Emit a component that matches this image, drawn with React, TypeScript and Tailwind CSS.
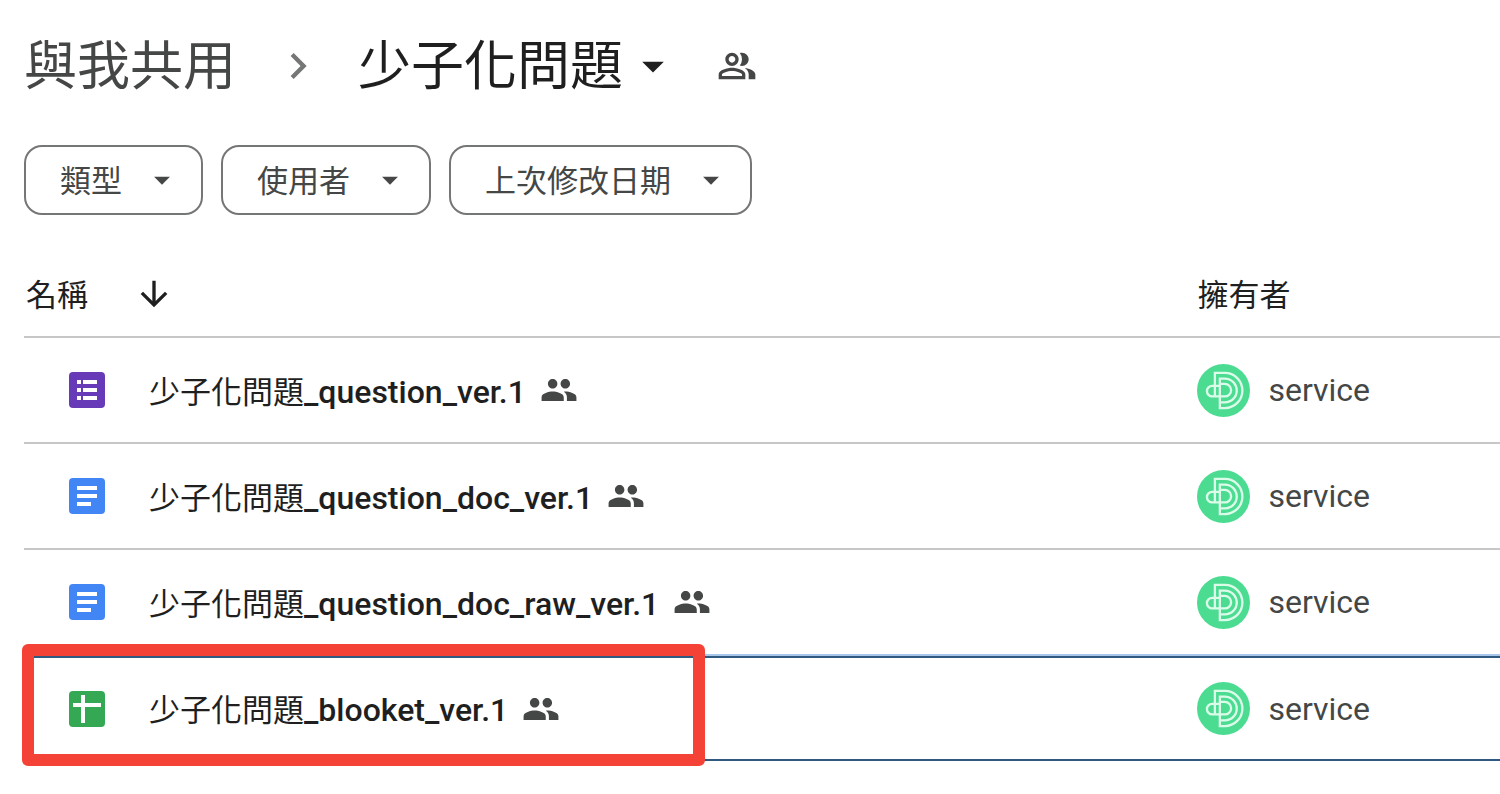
import * as React from "react"
import {
  MdArrowDownward,
  MdArrowDropDown,
  MdChevronRight,
  MdOutlinePeopleAlt,
  MdPeople,
} from "react-icons/md"

type FileKind = "form" | "doc" | "sheet"

interface DriveFile {
  kind: FileKind
  folder: string
  suffix: string
  owner: string
  selected?: boolean
}

const filters = ["類型", "使用者", "上次修改日期"]

const files: DriveFile[] = [
  { kind: "form", folder: "少子化問題", suffix: "_question_ver.1", owner: "service" },
  { kind: "doc", folder: "少子化問題", suffix: "_question_doc_ver.1", owner: "service" },
  { kind: "doc", folder: "少子化問題", suffix: "_question_doc_raw_ver.1", owner: "service" },
  { kind: "sheet", folder: "少子化問題", suffix: "_blooket_ver.1", owner: "service", selected: true },
]

function FileIcon({ kind }: { kind: FileKind }) {
  return (
    <svg viewBox="0 0 36 36" className="size-9 shrink-0" aria-hidden="true">
      {kind === "form" && (
        <>
          <rect width="36" height="36" rx="4" fill="#673ab7" />
          <path
            d="M8 8h4v4H8zM14 8h14v4H14zM8 16h4v4H8zM14 16h14v4H14zM8 24h4v4H8zM14 24h14v4H14z"
            fill="#fff"
          />
        </>
      )}
      {kind === "doc" && (
        <>
          <rect width="36" height="36" rx="4" fill="#4285f4" />
          <path d="M8 8h20v4H8zM8 16h20v4H8zM8 24h14v4H8z" fill="#fff" />
        </>
      )}
      {kind === "sheet" && (
        <>
          <rect width="36" height="36" rx="4" fill="#34a853" />
          <path d="M12 4h4v8h16v4H16v16h-4V16H4v-4h8z" fill="#fff" />
        </>
      )}
    </svg>
  )
}

function OwnerAvatar() {
  return (
    <svg viewBox="0 0 160 160" className="size-[53px] shrink-0" aria-hidden="true">
      <circle cx="80" cy="80" r="80" fill="#4bdc92" />
      <g fill="none" stroke="#dcfcea" strokeWidth="7">
        <path d="M54 98V27H84a53 53 0 0 1 0 106H69V44H84a36 36 0 0 1 0 72H69" />
        <path d="M69 66H46a16 16 0 0 0 0 32H84a19 19 0 0 0 0-38H69" />
      </g>
    </svg>
  )
}

function FileRow({ file }: { file: DriveFile }) {
  const border = file.selected
    ? "h-[105px] border-y-2 border-[#30597f]"
    : "h-[106px] border-b-2 border-[#c7c7c7] group-has-[+tr[aria-selected=true]]:border-[#a8c7ea]"

  return (
    <tr className="group" aria-selected={file.selected ?? false}>
      <td className={`relative p-0 ${border}`}>
        <div className="flex items-center pl-[45px]">
          <FileIcon kind={file.kind} />
          <a href="#" className="ml-11 pt-1 whitespace-nowrap text-[31px] leading-10 text-[#1f1f1f]">
            {file.folder}
            <span className="text-[32px] font-medium">{file.suffix}</span>
          </a>
          <MdPeople className="ml-3.5 size-[38px] shrink-0 text-[#444746]" aria-hidden="true" />
        </div>
        {file.selected && (
          <div className="pointer-events-none absolute -top-3.5 -bottom-[7px] -left-0.5 w-[683px] rounded-md border-12 border-[#f44336]" />
        )}
      </td>
      <td className={`p-0 ${border}`}>
        <div className="flex items-center gap-[18px] text-[32px] leading-10 text-[#444746]">
          <OwnerAvatar />
          {file.owner}
        </div>
      </td>
    </tr>
  )
}

export default function App() {
  return (
    <main className="min-h-screen overflow-x-hidden bg-white pl-6 font-[Roboto,'Noto_Sans_CJK_TC',sans-serif] text-[#1f1f1f]">
      <nav className="flex h-[131px] items-center text-[53px] leading-none" aria-label="Breadcrumb">
        <a href="#" className="pt-1 text-[#444746]">
          與我共用
        </a>
        <MdChevronRight className="ml-9 size-[52px] text-[#747775]" aria-hidden="true" />
        <button type="button" className="ml-[34px] flex items-center">
          <span className="pt-1">少子化問題</span>
          <MdArrowDropDown className="ml-1 size-[52px]" aria-hidden="true" />
        </button>
        <button type="button" className="ml-[38px] text-[#444746]" aria-label="共用">
          <MdOutlinePeopleAlt className="size-10" />
        </button>
      </nav>

      <div className="mt-3.5 flex gap-[18px]">
        {filters.map((label) => (
          <button
            key={label}
            type="button"
            className="flex h-[70px] items-center gap-[21px] rounded-[18px] border-2 border-[#747775] pr-5 pl-[34px] text-[31px] text-[#444746]"
          >
            <span className="pt-1">{label}</span>
            <MdArrowDropDown className="size-[38px]" aria-hidden="true" />
          </button>
        ))}
      </div>

      <table className="mt-9 w-full table-fixed border-separate border-spacing-0 text-left">
        <thead>
          <tr className="text-[31px] leading-10">
            <th className="h-[87px] w-[79.5%] border-b-2 border-[#c7c7c7] p-0 font-normal">
              <button type="button" className="flex items-center gap-[46px] pl-0.5">
                <span className="pt-1">名稱</span>
                <MdArrowDownward className="size-10" aria-hidden="true" />
              </button>
            </th>
            <th className="border-b-2 border-[#c7c7c7] p-0 pt-1 font-normal">擁有者</th>
          </tr>
        </thead>
        <tbody>
          {files.map((file) => (
            <FileRow key={file.suffix} file={file} />
          ))}
        </tbody>
      </table>
    </main>
  )
}
